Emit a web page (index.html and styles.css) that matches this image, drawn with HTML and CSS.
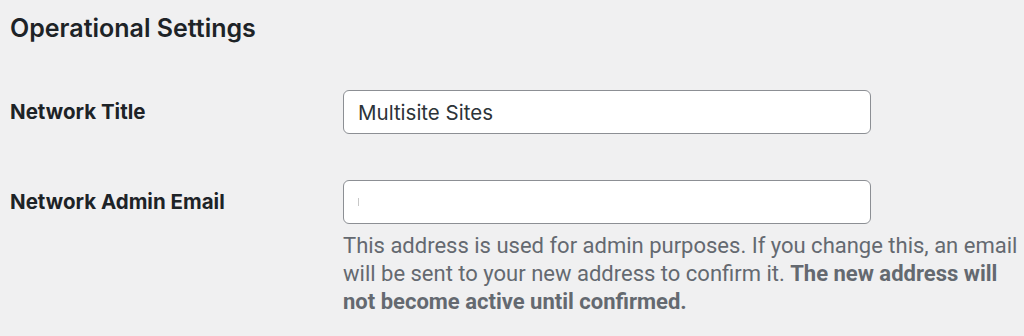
FILE: index.html
```html
<!DOCTYPE html>
<html>
<head>
<meta charset="utf-8">
<link rel="stylesheet" href="styles.css">
</head>
<body>
<div class="page">
  <h2 class="title">Operational Settings</h2>
  <div class="form">
    <div class="row">
      <label class="label" for="t">Network Title</label>
      <div class="field">
        <input id="t" class="input" type="text" value="Multisite Sites">
      </div>
    </div>
    <div class="row">
      <label class="label" for="e">Network Admin Email</label>
      <div class="field">
        <div class="input email"><span class="caret"></span></div>
        <p class="desc">This address is used for admin purposes. If you change this, an email will be sent to your new address to confirm it. <strong>The new address will not become active until confirmed.</strong></p>
      </div>
    </div>
  </div>
</div>
</body>
</html>
```
FILE: styles.css
```css
html, body {
  margin: 0;
  padding: 0;
  background: #f0f0f1;
}
.page {
  padding: 12px 10px 0 10px;
  font-family: Inter, "Noto Sans", sans-serif;
  color: #1d2327;
}
.title {
  margin: 0;
  font-size: 25px;
  font-weight: 600;
  line-height: 32px;
}
.form {
  margin-top: 46px;
  display: flex;
  flex-direction: column;
  gap: 46px;
}
.row {
  display: grid;
  grid-template-columns: 333px 528px;
  align-items: start;
}
.label {
  font-size: 20.5px;
  font-weight: 700;
  line-height: 24px;
  padding-top: 10px;
}
.field {
  display: flex;
  flex-direction: column;
}
.input {
  box-sizing: border-box;
  width: 528px;
  height: 44px;
  margin: 0;
  border: 1.5px solid #8c8f94;
  border-radius: 6px;
  background: #fff;
  padding: 0 14px;
  font-family: Inter, "Noto Sans", sans-serif;
  font-size: 20.5px;
  color: #2c3338;
  outline: none;
}
.email {
  display: flex;
  align-items: center;
}
.caret {
  width: 1px;
  height: 8px;
  background: #c8c8c8;
}
.desc {
  margin: 8px 0 0 0;
  width: 680px;
  font-family: Roboto, sans-serif;
  font-size: 22px;
  line-height: 28px;
  color: #646970;
}
.desc strong {
  font-weight: 700;
}
```
